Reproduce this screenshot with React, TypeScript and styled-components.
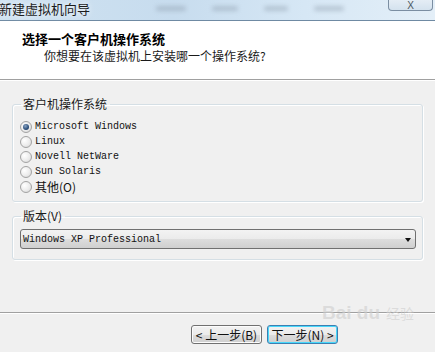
import React from 'react'
import styled, { createGlobalStyle } from 'styled-components'

const GlobalStyle = createGlobalStyle`
  html, body {
    margin: 0;
    padding: 0;
    background: #f0f0f0;
    overflow: hidden;
  }
`

const cjk = `"Noto Sans CJK SC", "Noto Sans", sans-serif`
const mono = `"Liberation Mono", "Noto Sans CJK SC", monospace`

const Window = styled.div`
  width: 435px;
  height: 352px;
  display: flex;
  flex-direction: column;
  background: #f0f0f0;
  position: relative;
  overflow: hidden;
  font-family: ${cjk};
`

const TitleBar = styled.div`
  height: 20px;
  flex: none;
  display: flex;
  align-items: flex-start;
  justify-content: space-between;
  background: linear-gradient(90deg, #cfe2f1 0%, #c7dcee 40%, #d6e7f5 70%, #e4eff8 100%);
  border-bottom: 1px solid #6f8aa3;
`

const TitleText = styled.span`
  font-size: 13px;
  line-height: 18px;
  color: #1c1c1c;
  margin-left: -1px;
  text-shadow: 0 0 6px #ffffff;
`

const Blurs = styled.div`
  display: flex;
  gap: 26px;
  margin-left: 22px;
  margin-top: 6px;
  filter: blur(2px);
`

const Blur = styled.div<{ w: number }>`
  width: ${p => p.w}px;
  height: 5px;
  border-radius: 3px;
  background: #8796a4;
  opacity: 0.4;
`

const CloseButton = styled.div`
  width: 43px;
  height: 11px;
  margin-right: 2px;
  margin-top: -1px;
  border: 1px solid #7b8ea2;
  border-top: none;
  border-radius: 0 0 4px 4px;
  background: linear-gradient(#e6eef6, #d4e2ee);
  display: flex;
  justify-content: center;
  align-items: flex-end;
  font-family: "Liberation Sans", sans-serif;
  font-size: 10px;
  line-height: 8px;
  color: #4a5560;
`

const Header = styled.div`
  height: 59px;
  flex: none;
  background: #ffffff;
  border-bottom: 1px solid #a0a0a0;
  box-shadow: 0 1px 0 #ffffff;
  padding: 10px 0 0 22px;
  box-sizing: border-box;
`

const Heading = styled.div`
  font-size: 13px;
  font-weight: 700;
  line-height: 16px;
  color: #000;
`

const SubHeading = styled.div`
  font-size: 12px;
  line-height: 16px;
  margin: 1px 0 0 22px;
  color: #1a1a1a;
`

const Body = styled.div`
  height: 230px;
  flex: none;
  margin-top: 2px;
  padding-top: 15px;
  box-sizing: border-box;
  display: flex;
  flex-direction: column;
`

const Group = styled.fieldset<{ gap?: number; pt: number; pb: number; pl: number }>`
  margin: ${p => p.gap ?? 0}px 12px 0 12px;
  padding: ${p => p.pt}px 6px ${p => p.pb}px ${p => p.pl}px;
  border: 1px solid #d5dfe5;
  border-radius: 3px;
  box-shadow: inset 1px 1px 0 #ffffff, 1px 1px 0 #ffffff;
  min-width: 0;
`

const Legend = styled.legend`
  font-size: 12px;
  line-height: 14px;
  padding: 0 3px 0 2px;
  margin-left: 1px;
  color: #1a1a1a;
`

const Option = styled.label`
  display: flex;
  align-items: center;
  height: 15px;
  gap: 3px;
  font-family: ${mono};
  font-size: 10px;
  color: #111;
`

const CjkLabel = styled.span`
  font-family: ${cjk};
  font-size: 12px;
`

const Radio = styled.span<{ checked?: boolean }>`
  width: 12px;
  height: 12px;
  box-sizing: border-box;
  border-radius: 50%;
  border: 1px solid #a3a3a3;
  background: radial-gradient(circle at 35% 35%, #ffffff 0%, #ececec 55%, #d2d2d2 100%);
  display: flex;
  align-items: center;
  justify-content: center;
  flex: none;

  &::after {
    content: '';
    display: ${p => (p.checked ? 'block' : 'none')};
    width: 6px;
    height: 6px;
    border-radius: 50%;
    background: radial-gradient(circle at 40% 35%, #8aa4c4 0%, #2c4f7a 60%, #1a3558 100%);
  }
`

const Combo = styled.div`
  height: 20px;
  box-sizing: border-box;
  border: 1px solid #707070;
  border-radius: 3px;
  background: linear-gradient(#f3f3f3 0%, #ebebeb 50%, #dddddd 51%, #cfcfcf 100%);
  display: flex;
  align-items: center;
  justify-content: space-between;
  padding: 0 4px 0 2px;
  font-family: ${mono};
  font-size: 10px;
  color: #111;
`

const Arrow = styled.span`
  width: 0;
  height: 0;
  border-left: 3.5px solid transparent;
  border-right: 3.5px solid transparent;
  border-top: 4px solid #111;
  margin-top: 1px;
`

const Footer = styled.div`
  flex: 1;
  border-top: 1px solid #a0a0a0;
  box-shadow: inset 0 1px 0 #ffffff;
  display: flex;
  justify-content: flex-end;
  align-items: flex-start;
  gap: 5px;
  padding: 12px 97px 0 0;
`

const Button = styled.div<{ primary?: boolean }>`
  width: 71px;
  height: 19px;
  box-sizing: border-box;
  border: 1px solid ${p => (p.primary ? '#3c7fb1' : '#707070')};
  border-radius: 3px;
  background: linear-gradient(#f2f2f2 0%, #ebebeb 50%, #dddddd 51%, #cfcfcf 100%);
  box-shadow: ${p => (p.primary ? 'inset 0 0 0 1px #48d8fb' : 'inset 0 0 0 1px #fcfcfc')};
  display: flex;
  align-items: center;
  justify-content: center;
  font-size: 12px;
  color: #111;
  white-space: pre;
`

const Watermark = styled.div`
  position: absolute;
  left: 322px;
  top: 302px;
  font-family: "Liberation Sans", sans-serif;
  font-size: 19px;
  font-weight: 700;
  color: rgba(205, 205, 205, 0.6);
  display: flex;
  align-items: baseline;
  gap: 6px;
  pointer-events: none;
`

const WatermarkCjk = styled.span`
  font-family: ${cjk};
  font-size: 14px;
  font-weight: 400;
`

const options = ['Microsoft Windows', 'Linux', 'Novell NetWare', 'Sun Solaris']

export default function App() {
  return (
    <Window>
      <GlobalStyle />
      <TitleBar>
        <TitleText>新建虚拟机向导</TitleText>
        <Blurs>
          <Blur w={30} />
          <Blur w={26} />
          <Blur w={24} />
          <Blur w={30} />
        </Blurs>
        <CloseButton>X</CloseButton>
      </TitleBar>
      <Header>
        <Heading>选择一个客户机操作系统</Heading>
        <SubHeading>你想要在该虚拟机上安装哪一个操作系统?</SubHeading>
      </Header>
      <Body>
        <Group pt={8} pb={7} pl={7}>
          <Legend>客户机操作系统</Legend>
          {options.map((name, i) => (
            <Option key={name}>
              <Radio checked={i === 0} />
              {name}
            </Option>
          ))}
          <Option>
            <Radio />
            <CjkLabel>其他(O)</CjkLabel>
          </Option>
        </Group>
        <Group gap={7} pt={6} pb={10} pl={7}>
          <Legend>版本(V)</Legend>
          <Combo>
            Windows XP Professional
            <Arrow />
          </Combo>
        </Group>
      </Body>
      <Footer>
        <Button>{'< 上一步(B)'}</Button>
        <Button primary>{'下一步(N) >'}</Button>
      </Footer>
      <Watermark>
        Bai du<WatermarkCjk>经验</WatermarkCjk>
      </Watermark>
    </Window>
  )
}
